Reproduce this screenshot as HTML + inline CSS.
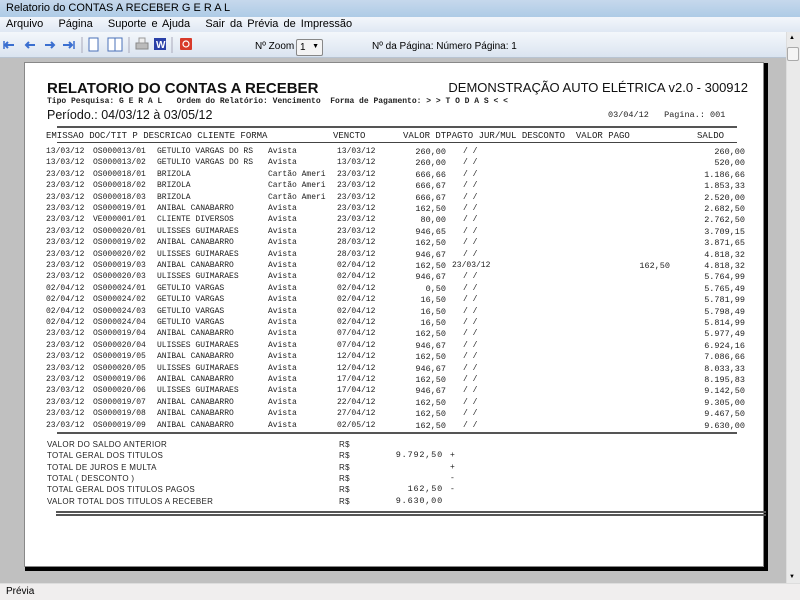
<!DOCTYPE html>
<html><head><meta charset="utf-8"><style>
*{margin:0;padding:0;box-sizing:border-box}
body{width:800px;height:600px;overflow:hidden;background:#c0c0c0;font-family:"Liberation Sans",sans-serif;position:relative}
.a{position:absolute;white-space:nowrap}
.m{font-family:"Liberation Mono",monospace;font-size:8px;color:#222}
.v{font-family:"Liberation Mono",monospace;font-size:8.5px;color:#222;text-align:right}
.row{position:absolute;left:0;width:800px;height:11px}
.row span{position:absolute;white-space:nowrap}
.tl{font-family:"Liberation Sans",sans-serif;font-size:8px;color:#222;letter-spacing:.3px}
</style></head><body>
<div class="a" style="left:0;top:0;width:800px;height:17px;background:linear-gradient(#c6d8ec,#aecbe6);"></div>
<div class="a" style="left:6px;top:2px;font-size:11px;color:#000">Relatorio do CONTAS A RECEBER G E R A L</div>
<div class="a" style="left:0;top:17px;width:800px;height:15px;background:linear-gradient(#f3f6fb,#dfe8f3)"></div>
<div class="a" style="left:6px;top:18px;font-size:11px;color:#000;word-spacing:2px">Arquivo&nbsp;&nbsp; Página&nbsp;&nbsp; Suporte e Ajuda&nbsp;&nbsp; Sair da Prévia de Impressão</div>
<div class="a" style="left:0;top:32px;width:786px;height:26px;background:linear-gradient(#f4f7fb,#dae4f0);border-bottom:1px solid #b8c4d2"></div>
<svg class="a" style="left:0;top:32px" width="200" height="26">
<g stroke="#3a6fd0" stroke-width="2" fill="none">
<path d="M5 13h9M8 10l-3 3 3 3"/><path d="M4 9v8" stroke-width="1.5"/>
<path d="M26 13h9M29 10l-3 3 3 3"/>
<path d="M45 13h9M51 10l3 3-3 3"/>
<path d="M63 13h9M69 10l3 3-3 3"/><path d="M74 9v8" stroke-width="1.5"/>
</g>
<line x1="82" y1="5" x2="82" y2="21" stroke="#aab"/>
<rect x="89" y="6" width="9" height="13" fill="#fff" stroke="#4a70b8"/>
<rect x="108" y="6" width="7" height="13" fill="#fff" stroke="#4a70b8"/><rect x="115" y="6" width="7" height="13" fill="#fff" stroke="#4a70b8"/>
<line x1="129" y1="5" x2="129" y2="21" stroke="#aab"/>
<rect x="136" y="11" width="12" height="6" fill="#bbb" stroke="#888"/><rect x="139" y="6" width="6" height="5" fill="#eee" stroke="#999"/>
<rect x="154" y="6" width="12" height="12" fill="#2a40a8"/><text x="156" y="16" font-size="10" font-weight="bold" fill="#fff" font-family="Liberation Sans">W</text>
<line x1="172" y1="5" x2="172" y2="21" stroke="#aab"/>
<rect x="180" y="6" width="12" height="12" fill="#d83a2a" rx="1"/><circle cx="186" cy="12" r="3" stroke="#fff" fill="none" stroke-width="1.2"/>
</svg>
<div class="a" style="left:255px;top:41px;font-size:10px;color:#000">Nº Zoom</div>
<div class="a" style="left:296px;top:39px;width:27px;height:17px;background:#f4f4f4;border:1px solid #888;border-radius:2px;font-size:10px;padding:2px 0 0 3px">1<span style="position:absolute;right:3px;top:3px;font-size:7px">▼</span></div>
<div class="a" style="left:372px;top:41px;font-size:10px;color:#000">Nº da Página: Número Página: 1</div>
<div class="a" style="left:786px;top:32px;width:14px;height:551px;background:#eaeaea;border-left:1px solid #ddd"></div>
<div class="a" style="left:787px;top:47px;width:12px;height:14px;background:#f4f4f4;border:1px solid #aaa;border-radius:2px"></div>
<div class="a" style="left:789px;top:35px;font-size:6px">▲</div>
<div class="a" style="left:789px;top:574px;font-size:6px">▼</div>
<div class="a" style="left:0;top:583px;width:800px;height:17px;background:#f0eeee;border-top:1px solid #ddd"></div>
<div class="a" style="left:6px;top:586px;font-size:10px;color:#000">Prévia</div>
<div class="a" style="left:25px;top:63px;width:743px;height:508px;background:#000"></div>
<div class="a" style="left:24px;top:62px;width:740px;height:505px;background:#fff;border:1px solid #888"></div>
<div class="a" style="left:47px;top:80px;font-size:15px;font-weight:bold;color:#111">RELATORIO DO CONTAS A RECEBER</div>
<div class="a" style="right:52px;top:80px;font-size:13px;color:#111">DEMONSTRAÇÃO AUTO ELÉTRICA v2.0 - 300912</div>
<div class="a m" style="left:47px;top:97px;font-weight:bold;font-size:8px">Tipo Pesquisa: G E R A L&nbsp;&nbsp; Ordem do Relatório: Vencimento&nbsp; Forma de Pagamento: &gt; &gt; T O D A S &lt; &lt;</div>
<div class="a" style="left:47px;top:108px;font-size:12.5px;color:#111">Período.: 04/03/12 à 03/05/12</div>
<div class="a m" style="left:608px;top:110px;font-size:8.5px">03/04/12&nbsp;&nbsp; Pagina.: 001</div>
<div class="a" style="left:57px;top:126px;width:680px;height:2px;background:#555"></div>
<div class="a m" style="left:46px;top:131px;font-size:9px">EMISSAO DOC/TIT P DESCRICAO CLIENTE FORMA</div>
<div class="a m" style="left:333px;top:131px;font-size:9px">VENCTO</div>
<div class="a m" style="left:403px;top:131px;font-size:9px">VALOR DTPAGTO JUR/MUL DESCONTO&nbsp; VALOR PAGO</div>
<div class="a m" style="left:697px;top:131px;font-size:9px">SALDO</div>
<div class="a" style="left:57px;top:142px;width:680px;height:1px;background:#444"></div>

<div class="a" style="left:57px;top:432px;width:680px;height:2px;background:#555"></div>

<div class="a tl" style="left:47px;top:440px">VALOR DO SALDO ANTERIOR</div>
<div class="a tl" style="left:47px;top:451px">TOTAL GERAL DOS TITULOS</div>
<div class="a tl" style="left:47px;top:463px">TOTAL DE JUROS E MULTA</div>
<div class="a tl" style="left:47px;top:474px">TOTAL ( DESCONTO )</div>
<div class="a tl" style="left:47px;top:485px">TOTAL GERAL DOS TITULOS PAGOS</div>
<div class="a tl" style="left:47px;top:497px">VALOR TOTAL DOS TITULOS A RECEBER</div>
<div class="a tl" style="left:339px;top:440px">R$</div>
<div class="a tl" style="left:339px;top:451px">R$</div>
<div class="a tl" style="left:339px;top:463px">R$</div>
<div class="a tl" style="left:339px;top:474px">R$</div>
<div class="a tl" style="left:339px;top:485px">R$</div>
<div class="a tl" style="left:339px;top:497px">R$</div>
<div class="a m" style="right:357px;top:450px;font-size:8.5px;letter-spacing:.8px">9.792,50</div>
<div class="a m" style="right:357px;top:484px;font-size:8.5px;letter-spacing:.8px">162,50</div>
<div class="a m" style="right:357px;top:496px;font-size:8.5px;letter-spacing:.8px">9.630,00</div>
<div class="a m" style="left:450px;top:451px;font-size:8px">+</div>
<div class="a m" style="left:450px;top:463px;font-size:8px">+</div>
<div class="a m" style="left:450px;top:474px;font-size:8px">-</div>
<div class="a m" style="left:450px;top:485px;font-size:8px">-</div>
<div class="a" style="left:56px;top:511px;width:710px;height:2px;background:#555"></div>
<div class="a" style="left:56px;top:514px;width:710px;height:2px;background:#555"></div>

<div style="position:absolute;left:0;top:0">
<div class="row m" style="top:147px"><span style="left:46px">13/03/12</span><span style="left:93px">OS000013/01</span><span style="left:157px">GETULIO VARGAS DO RS</span><span style="left:268px">Avista</span><span style="left:337px">13/03/12</span><span class="v" style="right:354px">260,00</span><span style="left:463px">/ /</span><span class="v" style="right:55px">260,00</span></div>
<div class="row m" style="top:158.4px"><span style="left:46px">13/03/12</span><span style="left:93px">OS000013/02</span><span style="left:157px">GETULIO VARGAS DO RS</span><span style="left:268px">Avista</span><span style="left:337px">13/03/12</span><span class="v" style="right:354px">260,00</span><span style="left:463px">/ /</span><span class="v" style="right:55px">520,00</span></div>
<div class="row m" style="top:169.8px"><span style="left:46px">23/03/12</span><span style="left:93px">OS000018/01</span><span style="left:157px">BRIZOLA</span><span style="left:268px">Cartão Ameri</span><span style="left:337px">23/03/12</span><span class="v" style="right:354px">666,66</span><span style="left:463px">/ /</span><span class="v" style="right:55px">1.186,66</span></div>
<div class="row m" style="top:181.2px"><span style="left:46px">23/03/12</span><span style="left:93px">OS000018/02</span><span style="left:157px">BRIZOLA</span><span style="left:268px">Cartão Ameri</span><span style="left:337px">23/03/12</span><span class="v" style="right:354px">666,67</span><span style="left:463px">/ /</span><span class="v" style="right:55px">1.853,33</span></div>
<div class="row m" style="top:192.6px"><span style="left:46px">23/03/12</span><span style="left:93px">OS000018/03</span><span style="left:157px">BRIZOLA</span><span style="left:268px">Cartão Ameri</span><span style="left:337px">23/03/12</span><span class="v" style="right:354px">666,67</span><span style="left:463px">/ /</span><span class="v" style="right:55px">2.520,00</span></div>
<div class="row m" style="top:204px"><span style="left:46px">23/03/12</span><span style="left:93px">OS000019/01</span><span style="left:157px">ANIBAL CANABARRO</span><span style="left:268px">Avista</span><span style="left:337px">23/03/12</span><span class="v" style="right:354px">162,50</span><span style="left:463px">/ /</span><span class="v" style="right:55px">2.682,50</span></div>
<div class="row m" style="top:215.4px"><span style="left:46px">23/03/12</span><span style="left:93px">VE000001/01</span><span style="left:157px">CLIENTE DIVERSOS</span><span style="left:268px">Avista</span><span style="left:337px">23/03/12</span><span class="v" style="right:354px">80,00</span><span style="left:463px">/ /</span><span class="v" style="right:55px">2.762,50</span></div>
<div class="row m" style="top:226.8px"><span style="left:46px">23/03/12</span><span style="left:93px">OS000020/01</span><span style="left:157px">ULISSES GUIMARAES</span><span style="left:268px">Avista</span><span style="left:337px">23/03/12</span><span class="v" style="right:354px">946,65</span><span style="left:463px">/ /</span><span class="v" style="right:55px">3.709,15</span></div>
<div class="row m" style="top:238.2px"><span style="left:46px">23/03/12</span><span style="left:93px">OS000019/02</span><span style="left:157px">ANIBAL CANABARRO</span><span style="left:268px">Avista</span><span style="left:337px">28/03/12</span><span class="v" style="right:354px">162,50</span><span style="left:463px">/ /</span><span class="v" style="right:55px">3.871,65</span></div>
<div class="row m" style="top:249.6px"><span style="left:46px">23/03/12</span><span style="left:93px">OS000020/02</span><span style="left:157px">ULISSES GUIMARAES</span><span style="left:268px">Avista</span><span style="left:337px">28/03/12</span><span class="v" style="right:354px">946,67</span><span style="left:463px">/ /</span><span class="v" style="right:55px">4.818,32</span></div>
<div class="row m" style="top:261px"><span style="left:46px">23/03/12</span><span style="left:93px">OS000019/03</span><span style="left:157px">ANIBAL CANABARRO</span><span style="left:268px">Avista</span><span style="left:337px">02/04/12</span><span class="v" style="right:354px">162,50</span><span style="left:452px">23/03/12</span><span class="v" style="right:130px">162,50</span><span class="v" style="right:55px">4.818,32</span></div>
<div class="row m" style="top:272.4px"><span style="left:46px">23/03/12</span><span style="left:93px">OS000020/03</span><span style="left:157px">ULISSES GUIMARAES</span><span style="left:268px">Avista</span><span style="left:337px">02/04/12</span><span class="v" style="right:354px">946,67</span><span style="left:463px">/ /</span><span class="v" style="right:55px">5.764,99</span></div>
<div class="row m" style="top:283.8px"><span style="left:46px">02/04/12</span><span style="left:93px">OS000024/01</span><span style="left:157px">GETULIO VARGAS</span><span style="left:268px">Avista</span><span style="left:337px">02/04/12</span><span class="v" style="right:354px">0,50</span><span style="left:463px">/ /</span><span class="v" style="right:55px">5.765,49</span></div>
<div class="row m" style="top:295.2px"><span style="left:46px">02/04/12</span><span style="left:93px">OS000024/02</span><span style="left:157px">GETULIO VARGAS</span><span style="left:268px">Avista</span><span style="left:337px">02/04/12</span><span class="v" style="right:354px">16,50</span><span style="left:463px">/ /</span><span class="v" style="right:55px">5.781,99</span></div>
<div class="row m" style="top:306.6px"><span style="left:46px">02/04/12</span><span style="left:93px">OS000024/03</span><span style="left:157px">GETULIO VARGAS</span><span style="left:268px">Avista</span><span style="left:337px">02/04/12</span><span class="v" style="right:354px">16,50</span><span style="left:463px">/ /</span><span class="v" style="right:55px">5.798,49</span></div>
<div class="row m" style="top:318px"><span style="left:46px">02/04/12</span><span style="left:93px">OS000024/04</span><span style="left:157px">GETULIO VARGAS</span><span style="left:268px">Avista</span><span style="left:337px">02/04/12</span><span class="v" style="right:354px">16,50</span><span style="left:463px">/ /</span><span class="v" style="right:55px">5.814,99</span></div>
<div class="row m" style="top:329.4px"><span style="left:46px">23/03/12</span><span style="left:93px">OS000019/04</span><span style="left:157px">ANIBAL CANABARRO</span><span style="left:268px">Avista</span><span style="left:337px">07/04/12</span><span class="v" style="right:354px">162,50</span><span style="left:463px">/ /</span><span class="v" style="right:55px">5.977,49</span></div>
<div class="row m" style="top:340.8px"><span style="left:46px">23/03/12</span><span style="left:93px">OS000020/04</span><span style="left:157px">ULISSES GUIMARAES</span><span style="left:268px">Avista</span><span style="left:337px">07/04/12</span><span class="v" style="right:354px">946,67</span><span style="left:463px">/ /</span><span class="v" style="right:55px">6.924,16</span></div>
<div class="row m" style="top:352.2px"><span style="left:46px">23/03/12</span><span style="left:93px">OS000019/05</span><span style="left:157px">ANIBAL CANABARRO</span><span style="left:268px">Avista</span><span style="left:337px">12/04/12</span><span class="v" style="right:354px">162,50</span><span style="left:463px">/ /</span><span class="v" style="right:55px">7.086,66</span></div>
<div class="row m" style="top:363.6px"><span style="left:46px">23/03/12</span><span style="left:93px">OS000020/05</span><span style="left:157px">ULISSES GUIMARAES</span><span style="left:268px">Avista</span><span style="left:337px">12/04/12</span><span class="v" style="right:354px">946,67</span><span style="left:463px">/ /</span><span class="v" style="right:55px">8.033,33</span></div>
<div class="row m" style="top:375px"><span style="left:46px">23/03/12</span><span style="left:93px">OS000019/06</span><span style="left:157px">ANIBAL CANABARRO</span><span style="left:268px">Avista</span><span style="left:337px">17/04/12</span><span class="v" style="right:354px">162,50</span><span style="left:463px">/ /</span><span class="v" style="right:55px">8.195,83</span></div>
<div class="row m" style="top:386.4px"><span style="left:46px">23/03/12</span><span style="left:93px">OS000020/06</span><span style="left:157px">ULISSES GUIMARAES</span><span style="left:268px">Avista</span><span style="left:337px">17/04/12</span><span class="v" style="right:354px">946,67</span><span style="left:463px">/ /</span><span class="v" style="right:55px">9.142,50</span></div>
<div class="row m" style="top:397.8px"><span style="left:46px">23/03/12</span><span style="left:93px">OS000019/07</span><span style="left:157px">ANIBAL CANABARRO</span><span style="left:268px">Avista</span><span style="left:337px">22/04/12</span><span class="v" style="right:354px">162,50</span><span style="left:463px">/ /</span><span class="v" style="right:55px">9.305,00</span></div>
<div class="row m" style="top:409.2px"><span style="left:46px">23/03/12</span><span style="left:93px">OS000019/08</span><span style="left:157px">ANIBAL CANABARRO</span><span style="left:268px">Avista</span><span style="left:337px">27/04/12</span><span class="v" style="right:354px">162,50</span><span style="left:463px">/ /</span><span class="v" style="right:55px">9.467,50</span></div>
<div class="row m" style="top:420.6px"><span style="left:46px">23/03/12</span><span style="left:93px">OS000019/09</span><span style="left:157px">ANIBAL CANABARRO</span><span style="left:268px">Avista</span><span style="left:337px">02/05/12</span><span class="v" style="right:354px">162,50</span><span style="left:463px">/ /</span><span class="v" style="right:55px">9.630,00</span></div>
</div>
</body></html>
